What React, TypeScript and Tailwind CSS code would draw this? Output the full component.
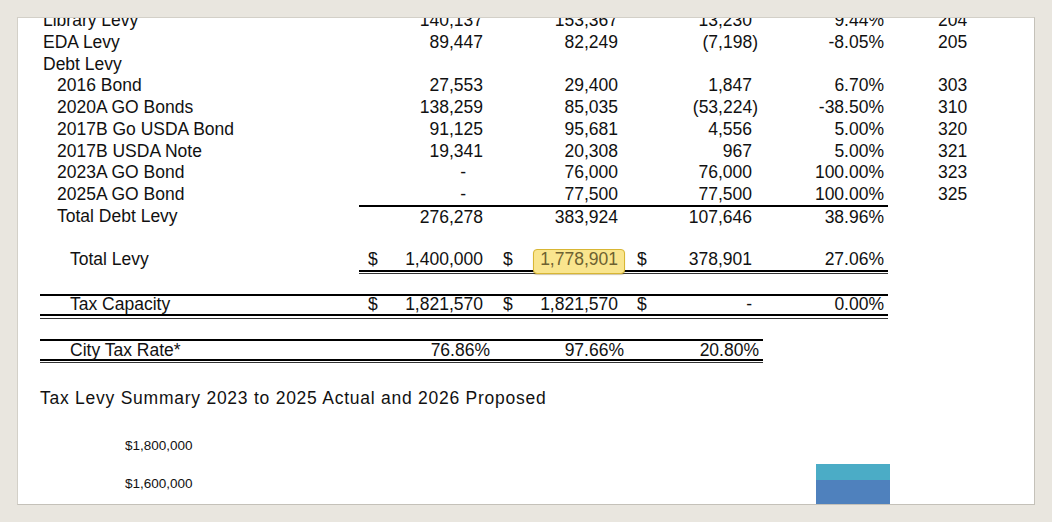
import React from "react";

type Line = {
  label: string;
  sub?: boolean;
  a?: string;
  b?: string;
  c?: string;
  p?: string;
  code?: string;
  rule?: boolean;
};

const lines: Line[] = [
  { label: "Library Levy", a: "140,137", b: "153,367", c: "13,230", p: "9.44%", code: "204" },
  { label: "EDA Levy", a: "89,447", b: "82,249", c: "(7,198)", p: "-8.05%", code: "205" },
  { label: "Debt Levy" },
  { label: "2016 Bond", sub: true, a: "27,553", b: "29,400", c: "1,847", p: "6.70%", code: "303" },
  { label: "2020A GO Bonds", sub: true, a: "138,259", b: "85,035", c: "(53,224)", p: "-38.50%", code: "310" },
  { label: "2017B Go USDA Bond", sub: true, a: "91,125", b: "95,681", c: "4,556", p: "5.00%", code: "320" },
  { label: "2017B USDA Note", sub: true, a: "19,341", b: "20,308", c: "967", p: "5.00%", code: "321" },
  { label: "2023A GO Bond", sub: true, a: "-", b: "76,000", c: "76,000", p: "100.00%", code: "323" },
  { label: "2025A GO Bond", sub: true, a: "-", b: "77,500", c: "77,500", p: "100.00%", code: "325" },
  { label: "Total Debt Levy", sub: true, a: "276,278", b: "383,924", c: "107,646", p: "38.96%", rule: true },
];

// thick line, small gap, thin line - like the excel double underline
function DoubleRule({ className }: { className: string }) {
  return (
    <div className={className}>
      <div className="border-t-2 border-black" />
      <div className="mt-[1.5px] border-t border-[#333]" />
    </div>
  );
}

function LevyRow({ l }: { l: Line }) {
  return (
    <div className="flex h-[21.75px] items-center">
      <div className={l.sub ? "w-[319px] pl-[17px]" : "w-[319px] pl-[3px]"}>{l.label}</div>
      <div className={l.rule ? "flex h-full w-[529px] items-center border-t-2 border-black" : "flex h-full w-[529px] items-center"}>
        <div className={l.a === "-" ? "w-[131px] pr-[24px] text-right" : "w-[131px] pr-[7px] text-right"}>{l.a}</div>
        <div className="w-[134px] pr-[6px] text-right">{l.b}</div>
        <div className={l.c && l.c.endsWith(")") ? "w-[139px] pr-[5px] text-right" : "w-[139px] pr-[11px] text-right"}>{l.c}</div>
        <div className="w-[125px] pr-[4px] text-right">{l.p}</div>
      </div>
      <div className="pl-[50px]">{l.code}</div>
    </div>
  );
}

export default function App() {
  return (
    <div className="h-[522px] w-[1052px] overflow-hidden bg-[#e9e6df] pl-[17px] pt-[17px]">
      <div className="h-[488px] w-[1018px] overflow-hidden border border-[#d3d0c8] border-b-[#c4c1b9] border-r-[#c4c1b9] bg-white pl-[22px] font-['Liberation_Sans',Arial,sans-serif] text-[17.5px] text-[#111]">
        <div className="-mt-[8.6px]">
          {lines.map((l) => (
            <LevyRow key={l.label} l={l} />
          ))}
        </div>

        {/* Total Levy */}
        <div className="mt-[21.2px] flex h-[21.75px] items-center">
          <div className="w-[319px] pl-[30px]">Total Levy</div>
          <div className="flex h-full w-[529px] items-center">
            <div className="flex w-[131px] items-center justify-between pl-[9px] pr-[7px]">
              <span>$</span>
              <span>1,400,000</span>
            </div>
            <div className="flex w-[134px] items-center justify-between pl-[13px] pr-[6px]">
              <span>$</span>
              <span className="relative z-10 -mr-[7px] mt-[5px] rounded-[4px] border border-[#d8b634] bg-[#f9e58e] pb-[5px] pl-[6px] pr-[6px] leading-[18px] text-[#6d6131] shadow-[0_1px_1px_rgba(120,90,0,0.35)]">
                1,778,901
              </span>
            </div>
            <div className="flex w-[139px] items-center justify-between pl-[13px] pr-[11px]">
              <span>$</span>
              <span>378,901</span>
            </div>
            <div className="w-[125px] pr-[4px] text-right">27.06%</div>
          </div>
        </div>
        <DoubleRule className="ml-[319px] w-[529px]" />

        {/* Tax Capacity */}
        <div className="mt-[20px] w-[848px] border-t-2 border-black">
          <div className="flex h-[18px] items-center pb-[2px]">
            <div className="w-[319px] pl-[30px]">Tax Capacity</div>
            <div className="flex w-[131px] items-center justify-between pl-[9px] pr-[7px]">
              <span>$</span>
              <span>1,821,570</span>
            </div>
            <div className="flex w-[134px] items-center justify-between pl-[13px] pr-[6px]">
              <span>$</span>
              <span>1,821,570</span>
            </div>
            <div className="flex w-[139px] items-center justify-between pl-[13px] pr-[11px]">
              <span>$</span>
              <span>-</span>
            </div>
            <div className="w-[125px] pr-[4px] text-right">0.00%</div>
          </div>
          <DoubleRule className="w-full" />
        </div>

        {/* City Tax Rate */}
        <div className="mt-[20px] w-[723px] border-t-2 border-black">
          <div className="flex h-[18px] items-center">
            <div className="w-[319px] pl-[30px]">City Tax Rate*</div>
            <div className="w-[131px] text-right">76.86%</div>
            <div className="w-[134px] text-right">97.66%</div>
            <div className="w-[139px] pr-[4px] text-right">20.80%</div>
          </div>
          <DoubleRule className="w-full" />
        </div>

        <div className="mt-[25px] leading-[20px] tracking-[0.75px]">
          Tax Levy Summary 2023 to 2025 Actual and 2026 Proposed
        </div>

        {/* chart, only the top of it is visible */}
        <div className="mt-[30px] flex">
          <div className="flex w-[776px] flex-col gap-[22px] pl-[85px] text-[13.5px] leading-[16px]">
            <span>$1,800,000</span>
            <span>$1,600,000</span>
          </div>
          <div className="mt-[26px] flex w-[74px] flex-col">
            <div className="h-[16px] bg-[#4bacc6]" />
            <div className="h-[60px] bg-[#4f81bd]" />
          </div>
        </div>
      </div>
    </div>
  );
}
